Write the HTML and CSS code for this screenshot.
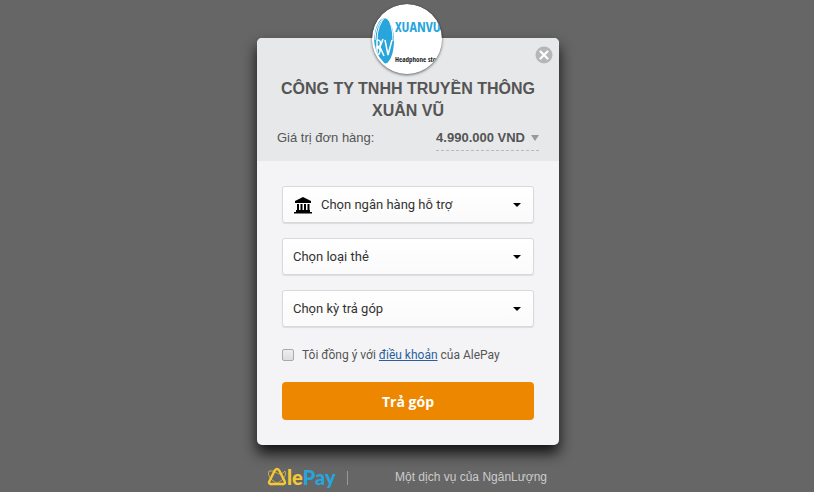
FILE: index.html
```html
<!DOCTYPE html>
<html lang="vi">
<head>
<meta charset="utf-8">
<meta name="viewport" content="width=device-width, initial-scale=1">
<title>AlePay</title>
<link rel="stylesheet" href="styles.css">
</head>
<body>
<main class="checkout">
  <form class="card">
    <svg class="merchant-logo" viewBox="0 0 70 70" role="img" aria-label="Xuanvu Headphone store">
      <defs><clipPath id="disc"><circle cx="35" cy="35" r="33"/></clipPath></defs>
      <circle cx="35" cy="35" r="35" fill="#fff"/>
      <g clip-path="url(#disc)">
        <ellipse cx="12" cy="37" rx="10" ry="23" fill="#27a5dc"/>
        <path d="M14 12q-9 9-9 24M15 13q6 8 6 24M11 14q-8 9-8 22" fill="none" stroke="#fff" stroke-width="1"/>
        <path d="M5 36v14M5 36q5 0 3 6l-3 1q5 2 2 7l-2 1M11 35l-3 8 4 9M13 36l3 15 4-15" fill="none" stroke="#fff" stroke-width="1.500"/>
      </g>
      <text class="logo-name" x="23" y="28">XUANVU</text>
      <text class="logo-tagline" x="23" y="58">Headphone sto</text>
    </svg>
    <button class="close" type="button" aria-label="Đóng">
      <svg viewBox="0 0 18 18"><circle cx="9" cy="9" r="8.500" fill="#b5b6b7"/><path d="M5.500 5.500l7 7M12.500 5.500l-7 7" stroke="#fff" stroke-width="2.200" stroke-linecap="round"/></svg>
    </button>
    <header class="card-header">
      <h1 class="merchant">CÔNG TY TNHH TRUYỀN THÔNG XUÂN VŨ</h1>
      <div class="order">
        <span class="order-label">Giá trị đơn hàng:</span>
        <button class="amount" type="button">4.990.000 VND</button>
      </div>
    </header>
    <div class="fields">
      <div class="field field-bank">
        <svg class="bank-icon" viewBox="0 0 18 17"><path d="M9 0l8 4v2H1V4zM3 7h2v7H3zM6.500 7h2v7h-2zM10 7h2v7h-2zM13.500 7h2v7h-2zM2 13h14v2H2zM0 15h18v1.500H0z"/></svg>
        <select class="select" aria-label="Ngân hàng"><option>Chọn ngân hàng hỗ trợ</option></select>
      </div>
      <div class="field"><select class="select" aria-label="Loại thẻ"><option>Chọn loại thẻ</option></select></div>
      <div class="field"><select class="select" aria-label="Kỳ trả góp"><option>Chọn kỳ trả góp</option></select></div>
      <div class="terms">
        <input class="checkbox" type="checkbox" id="agree">
        <label for="agree">Tôi đồng ý với <a href="#">điều khoản</a> của AlePay</label>
      </div>
      <button class="submit" type="submit">Trả góp</button>
    </div>
  </form>
  <footer class="footer">
    <div class="brand">
      <svg class="brand-mark" viewBox="0 0 20 20"><path d="M10 2q1.500 0 2.500 2l5 10q1.500 3-1.500 3H4q-3 0-1.500-3l5-10Q8.500 2 10 2z" fill="none" stroke="#f5c935" stroke-width="2.400"/><path d="M2 4q-2 4 3 9t12 5M18 4q2 4-3 9T3 18M2 4q4-1 8 2t8-2" fill="none" stroke="#f5c935" stroke-width="1" opacity=".7"/></svg>
      <span class="brand-ale">le</span><span class="brand-pay">Pay</span>
    </div>
    <span class="service">Một dịch vụ của NgânLượng</span>
  </footer>
</main>
</body>
</html>
```
FILE: styles.css
```css
* { box-sizing: border-box; }
body {
  margin: 0;
  background: #666;
  color: #555;
  font-family: "Liberation Sans", sans-serif;
}
button { font: inherit; color: inherit; border: 0; cursor: pointer; }
.checkout {
  width: 100%;
  max-width: 302px;
  margin: 0 auto;
  padding-top: 38px;
  position: relative;
  left: 1px;
}
.card {
  position: relative;
  border-radius: 5px;
  background: #f4f4f7;
  box-shadow: 0 8px 14px #111;
}
.merchant-logo {
  position: absolute;
  top: -34px;
  left: calc(50% - 36px);
  width: 70px;
  height: 70px;
  border-radius: 50%;
  box-shadow: 0 1px 3px rgba(0, 0, 0, .6);
}
.logo-name {
  font: bold 14px "Open Sans Condensed", Roboto, sans-serif;
  fill: #27a5dc;
}
.logo-tagline {
  font: 7px "Open Sans Condensed", Roboto, sans-serif;
  fill: #222;
}
.close {
  position: absolute;
  top: 8px;
  right: 6px;
  width: 18px;
  height: 18px;
  padding: 0;
  background: none;
}
.close svg { display: block; }
.card-header {
  padding: 40px 20px 10px;
  border-radius: 5px 5px 0 0;
  background: #e7e8ea;
}
.merchant {
  margin: 0;
  text-align: center;
  font: bold 16px/22px "Liberation Sans", sans-serif;
}
.order {
  display: flex;
  justify-content: space-between;
  align-items: flex-start;
  padding-top: 3px;
  font-size: 13px;
  line-height: 26px;
}
.amount {
  display: flex;
  align-items: center;
  gap: 6px;
  height: 26px;
  padding: 0;
  border-bottom: 1px dashed #bbb;
  background: none;
  font-weight: bold;
}
.amount::after {
  content: "";
  border: 4px solid transparent;
  border-top: 6px solid #999;
  border-bottom: 0;
}
.fields {
  display: flex;
  flex-direction: column;
  gap: 15px;
  padding: 25px;
}
.field { position: relative; }
.field::after {
  content: "";
  position: absolute;
  top: 17px;
  right: 13px;
  border: 4px solid transparent;
  border-top-color: #000;
  border-bottom: 0;
  pointer-events: none;
}
.select {
  display: block;
  width: 100%;
  height: 37px;
  padding: 0 30px 0 10px;
  border: 1px solid #d8d9db;
  border-radius: 3px;
  appearance: none;
  background: linear-gradient(#fff, #fafafa);
  box-shadow: 0 1px 1px rgba(0, 0, 0, .1);
  color: #333;
  font: 13px Roboto, sans-serif;
}
.field-bank .select { padding-left: 38px; }
.bank-icon {
  position: absolute;
  top: 11px;
  left: 12px;
  width: 18px;
  height: 17px;
}
.terms {
  display: flex;
  align-items: center;
  gap: 8px;
  height: 25px;
  font: 12px Roboto, sans-serif;
}
.terms a { color: #2b5f9b; }
.checkbox {
  width: 12px;
  height: 12px;
  margin: 0;
  appearance: none;
  border: 1px solid #aaa;
  border-radius: 2px;
  background: linear-gradient(#eee, #ddd);
}
.submit {
  height: 38px;
  border-radius: 4px;
  background: #ee8700;
  color: #fff;
  font: bold 14px "Open Sans", sans-serif;
}
.footer {
  display: flex;
  justify-content: space-between;
  align-items: center;
  padding: 20px 12px 0 10px;
  color: #ccc;
  font-size: 12px;
}
.brand {
  display: flex;
  align-items: center;
  padding-right: 12px;
  font: 900 20px/24px Lato, sans-serif;
  background: linear-gradient(#999, #999) right 6px / 1px 14px no-repeat;
}
.brand-mark { width: 20px; height: 20px; }
.brand-ale { color: #f5c935; }
.brand-pay { color: #27a5dc; }
```
